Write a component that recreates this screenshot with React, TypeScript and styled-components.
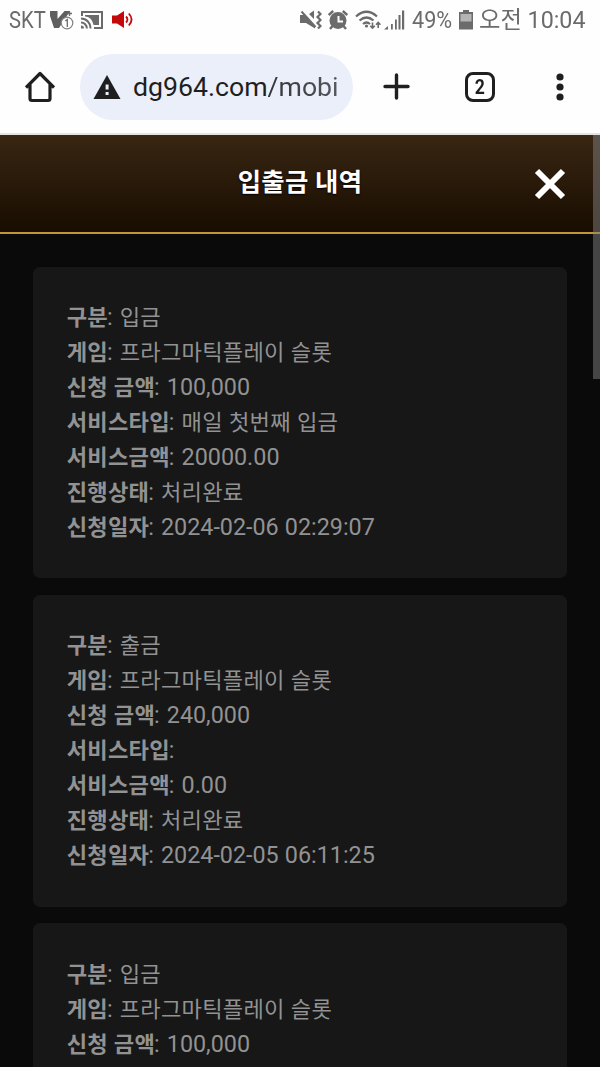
import React from 'react';
import styled, { createGlobalStyle } from 'styled-components';

const GlobalStyle = createGlobalStyle`
  * { box-sizing: border-box; }
  html, body { margin: 0; height: 1067px; overflow: hidden; background: #0a0a0a; }
  body { font-family: Roboto, 'Noto Sans CJK KR', sans-serif; }
`;

const Screen = styled.div`
  width: 600px;
  height: 1067px;
  overflow: hidden;
  display: flex;
  flex-direction: column;
`;

/* Status bar */
const StatusBar = styled.div`
  flex: none;
  display: flex;
  align-items: center;
  justify-content: space-between;
  height: 40px;
  padding: 0 13px 0 8.5px;
  background: #fefefe;
  color: #6b6b6b;
`;
const StatusGroup = styled.div`
  display: flex;
  align-items: center;
`;
const StatusText = styled.span<{ $width: number; $scale: number; $gap?: number }>`
  display: block;
  width: ${(p) => p.$width}px;
  margin-left: ${(p) => p.$gap ?? 0}px;
  font-size: 23.5px;
  line-height: 40px;
  white-space: nowrap;
  transform: scaleX(${(p) => p.$scale});
  transform-origin: left center;
`;
const StatusIcon = styled.svg<{ $gap: number }>`
  display: block;
  flex: none;
  margin-left: ${(p) => p.$gap}px;
`;

/* Browser toolbar */
const Toolbar = styled.div`
  flex: none;
  display: flex;
  align-items: center;
  height: 95px;
  padding: 0 20px 0;
  background: #fefefe;
  border-bottom: 2px solid #e4e4e2;
  color: #1f1f1f;
`;
const ToolIcon = styled.svg<{ $gap?: number }>`
  display: block;
  flex: none;
  margin-left: ${(p) => p.$gap ?? 0}px;
`;
const AddressBar = styled.div`
  display: flex;
  align-items: center;
  width: 273px;
  height: 66px;
  margin-left: 25px;
  padding-left: 13px;
  border-radius: 33px;
  background: #ebeff9;
`;
const Url = styled.span`
  margin-left: 12px;
  padding-top: 1px;
  font-size: 26.67px;
  line-height: 66px;
  white-space: nowrap;
`;
const UrlPath = styled.span`
  color: transparent;
  background: linear-gradient(90deg, #333436, #55585c);
  background-clip: text;
`;
const TabCount = styled.div`
  display: flex;
  align-items: center;
  justify-content: center;
  width: 30px;
  height: 30px;
  margin-left: 55px;
  border: 3px solid #1f1f1f;
  border-radius: 8px;
  font-size: 20px;
  font-weight: 700;
  line-height: 24px;
`;
const TabNumber = styled.span`
  transform: scaleX(0.88);
`;

/* Page */
const Page = styled.div`
  position: relative;
  flex: 1;
  min-height: 0;
  overflow: hidden;
  background: #0a0a0a;
`;
const ScrollThumb = styled.div`
  position: absolute;
  top: 0;
  right: 0;
  width: 7px;
  height: 243.5px;
  background: rgba(128, 128, 128, 0.5);
`;
const Header = styled.header`
  display: grid;
  grid-template-columns: 66px 1fr 66px;
  height: 98.67px;
  border-bottom: 2px solid #c8943a;
  background: linear-gradient(#392613, #180d00);
`;
const Title = styled.h1`
  grid-column: 2;
  margin: 0;
  text-align: center;
  font-size: 26.67px;
  font-weight: 700;
  line-height: 95px;
  color: #fff;
  text-shadow: 0 1px 2px #000;
`;
const CloseButton = styled.button`
  display: flex;
  align-items: center;
  padding: 2px 0 0;
  border: 0;
  background: none;
`;
const List = styled.main`
  display: flex;
  flex-direction: column;
  gap: 16.67px;
  padding: 33px 33.33px;
`;
const Card = styled.section`
  flex: none;
  padding: 33.33px;
  border-radius: 7px;
  background: #171717;
`;
const Row = styled.div`
  height: 35px;
  font-size: 23.33px;
  line-height: 35px;
  white-space: nowrap;
  color: #929292;
`;
const Label = styled.b`
  font-weight: 700;
`;
const Colon = styled.span`
  margin: 0 1px 0 -1px;
`;
const Value = styled.span`
  word-spacing: 0.3px;
`;
const Hangul = styled.span`
  font-family: 'Noto Sans CJK KR', sans-serif;
  font-size: 0.95em;
  line-height: 1;
  letter-spacing: 0.25px;
`;

const Text = ({ children }: { children: string }) => (
  <>
    {children.split(/([\uac00-\ud7a3]+)/).map((part, i) =>
      i % 2 ? <Hangul key={i}>{part}</Hangul> : part
    )}
  </>
);

type Entry = [string, string][];

const entry = (kind: string, amount: string, service: string, bonus: string, date: string): Entry => [
  ['구분', kind],
  ['게임', '프라그마틱플레이 슬롯'],
  ['신청 금액', amount],
  ['서비스타입', service],
  ['서비스금액', bonus],
  ['진행상태', '처리완료'],
  ['신청일자', date],
];

const entries: Entry[] = [
  entry('입금', '100,000', '매일 첫번째 입금', '20000.00', '2024-02-06 02:29:07'),
  entry('출금', '240,000', '', '0.00', '2024-02-05 06:11:25'),
  entry('입금', '100,000', '', '', '').slice(0, 3),
];

const VaccineIcon = () => (
  <StatusIcon $gap={4} width="24" height="20" viewBox="0 0 24 20">
    <path d="M0 1h7.500v8L14.500 1H20L9 18H0z" fill="#5f5f5f" />
    <path d="M0 6v12h4z" fill="#fefefe" />
    <path d="M19.500 1v5M17 3.500h5" stroke="#6b6b6b" strokeWidth="1.300" />
    <circle cx="17" cy="13" r="5.800" fill="#fefefe" stroke="#808080" strokeWidth="1.200" />
    <path d="M15.300 11l2-1.500V17" fill="none" stroke="#6b6b6b" strokeWidth="1.300" />
  </StatusIcon>
);

const CastIcon = () => (
  <StatusIcon $gap={7} width="22" height="18" viewBox="0 0 22 18" fill="none" stroke="#6b6b6b" strokeWidth="2">
    <path d="M1 5V1h20v16h-8" />
    <path d="M4 4h14v10h-5.500C11.500 9 9 6 4 5.500z" fill="#6b6b6b" stroke="none" />
    <path d="M0 7.500A9.500 9.500 0 0 1 9.500 17.500M0 11.500a5.800 5.800 0 0 1 5.800 6" />
    <path d="M0 14.500a3 3 0 0 1 3 3H0z" fill="#6b6b6b" stroke="none" />
  </StatusIcon>
);

const SpeakerIcon = () => (
  <StatusIcon $gap={9} width="22" height="18" viewBox="0 0 22 18">
    <path d="M0 4.500h5L12 0v17l-7-4.500H0z" fill="#c4090b" />
    <path d="M14 5.500q3 3 0 6M16.800 2.500q5.500 6 0 12" fill="none" stroke="#c4090b" strokeWidth="1.800" />
  </StatusIcon>
);

const MuteIcon = () => (
  <StatusIcon $gap={0} width="22" height="20" viewBox="0 0 22 20">
    <path d="M0 5h5l10 11v2.500L6 13H0zM9 4l5-3.500V9z" fill="#6b6b6b" />
    <path d="M1.500 1.500l14 15.500" stroke="#6b6b6b" strokeWidth="2" />
    <path d="M18 1.500l2.500 2.500-3 3 3 3-3 3 3 3-2.500 2.500" fill="none" stroke="#6b6b6b" strokeWidth="2.200" />
  </StatusIcon>
);

const AlarmIcon = () => (
  <StatusIcon $gap={6} width="20" height="20" viewBox="0 0 20 20">
    <circle cx="10" cy="10.500" r="8.500" fill="#6b6b6b" />
    <path d="M.7 5l4.500-4M19.300 5l-4.500-4M4.500 16L2 19M15.500 16l2.500 3" stroke="#6b6b6b" strokeWidth="2.400" />
    <path d="M10.500 6v5.500H15" fill="none" stroke="#fefefe" strokeWidth="2" />
  </StatusIcon>
);

const WifiIcon = () => (
  <StatusIcon $gap={7} width="27" height="20" viewBox="0 0 27 20" fill="none" stroke="#6b6b6b" strokeWidth="2.200">
    <path d="M1 6.500Q11.500-3 22 6.500M4.500 10.500q7-6 14 0M8 14q3.500-3 7 0" />
    <circle cx="11.500" cy="16" r="1.600" fill="#6b6b6b" stroke="none" />
    <path d="M17.500 12.500v5.500M15.200 15.700l2.300 2.300 2.300-2.300M23.200 18v-5.500M21 14.700l2.200-2.200 2.200 2.200" strokeWidth="1.600" />
  </StatusIcon>
);

const SignalIcon = () => (
  <StatusIcon $gap={2} width="21" height="20" viewBox="0 0 21 20" fill="#6b6b6b">
    <path d="M0 19.500l4-3.500v3.500zM7 14h1.800v5.500H7zM11 9.500h1.800v10H11zM14.500 5h2v14.500h-2zM18 .5h2.200v19H18z" />
  </StatusIcon>
);

const BatteryIcon = () => (
  <StatusIcon $gap={6} width="14" height="20" viewBox="0 0 14 20">
    <path d="M4 0h6v2h4v17.500H0V2h4z" fill="#6b6b6b" />
    <path d="M1.500 4h11v7.500h-11z" fill="#b4b4b4" />
  </StatusIcon>
);

export default function App() {
  return (
    <Screen>
      <GlobalStyle />
      <StatusBar>
        <StatusGroup>
          <StatusText $width={37} $scale={0.86}>SKT</StatusText>
          <VaccineIcon />
          <CastIcon />
          <SpeakerIcon />
        </StatusGroup>
        <StatusGroup>
          <MuteIcon />
          <AlarmIcon />
          <WifiIcon />
          <SignalIcon />
          <StatusText $gap={7} $width={41} $scale={0.92}>49%</StatusText>
          <BatteryIcon />
          <StatusText $gap={6} $width={108} $scale={0.99}>오전 10:04</StatusText>
        </StatusGroup>
      </StatusBar>
      <Toolbar>
        <ToolIcon $gap={5} width="30" height="32" viewBox="0 0 30 32" fill="none" stroke="#1f1f1f" strokeWidth="3.200" strokeLinejoin="round">
          <path d="M1 16.500L15 2.500l14 14M5 13v14.500q0 2 2 2h16q2 0 2-2V13" />
        </ToolIcon>
        <AddressBar>
          <svg width="28" height="24" viewBox="0 0 28 24">
            <path d="M14 0l13.500 24H.5z" fill="#1f1f1f" />
            <path d="M12.600 9.500h3v5h-3zM12.600 17h3v3h-3z" fill="#ebeff9" />
          </svg>
          <Url>
            dg964.com<UrlPath>/mobi</UrlPath>
          </Url>
        </AddressBar>
        <ToolIcon $gap={30} width="27" height="27" viewBox="0 0 27 27" stroke="#1f1f1f" strokeWidth="3.400" strokeLinecap="round">
          <path d="M13.500 2v23M2 13.500h23" />
        </ToolIcon>
        <TabCount>
          <TabNumber>2</TabNumber>
        </TabCount>
        <ToolIcon $gap={61} width="8" height="28" viewBox="0 0 8 28" fill="#1f1f1f">
          <circle cx="4" cy="4" r="3.600" />
          <circle cx="4" cy="14" r="3.600" />
          <circle cx="4" cy="24" r="3.600" />
        </ToolIcon>
      </Toolbar>
      <Page>
        <Header>
          <Title>
            <Text>입출금 내역</Text>
          </Title>
          <CloseButton aria-label="닫기">
            <svg width="32" height="32" viewBox="0 0 32 32" stroke="#fff" strokeWidth="6">
              <path d="M3 3l26 26M29 3L3 29" />
            </svg>
          </CloseButton>
        </Header>
        <List>
          {entries.map((rows, i) => (
            <Card key={i}>
              {rows.map(([label, value]) => (
                <Row key={label}>
                  <Label>
                    <Text>{label}</Text>
                  </Label>
                  <Colon>:</Colon>
                  <Value>
                    <Text>{` ${value}`}</Text>
                  </Value>
                </Row>
              ))}
            </Card>
          ))}
        </List>
        <ScrollThumb />
      </Page>
    </Screen>
  );
}
